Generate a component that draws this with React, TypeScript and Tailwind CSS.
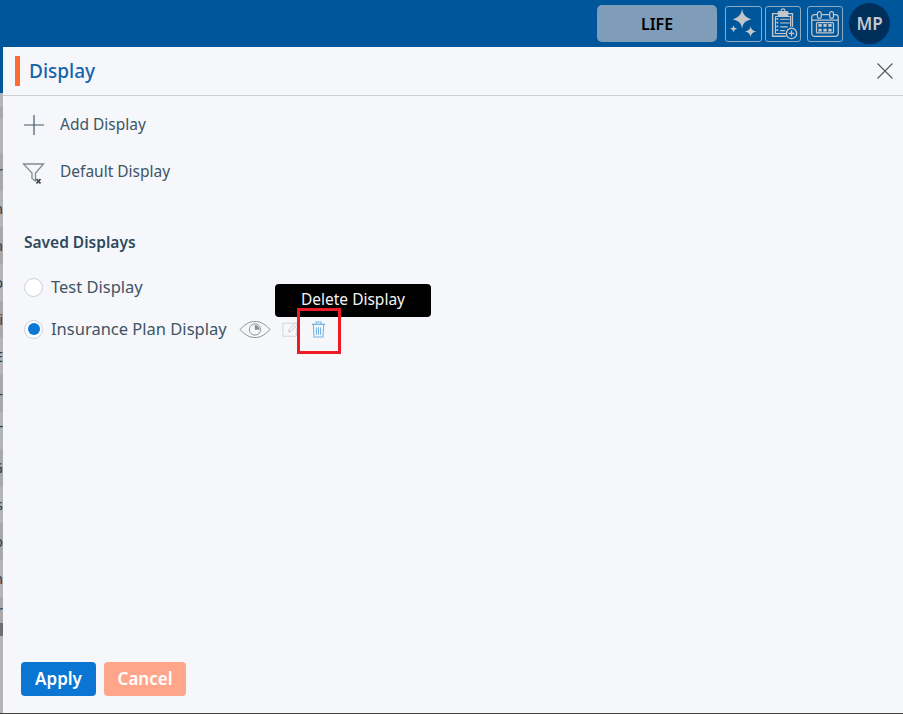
const font = { fontFamily: '"Noto Sans", sans-serif' };

const stripRows = [
  ["#00569b", "h-[46px]", ""],
  ["#b4b4b6", "h-[14px]", ""],
  ["#a9a9ab", "h-[12px]", ""],
  ["#b4b4b6", "h-[34px]", ""],
  ["#a9a9ab", "h-[37px]", "r"],
  ["#b4b4b6", "h-[37px]", "n"],
  ["#a9a9ab", "h-[37px]", "n"],
  ["#b4b4b6", "h-[37px]", "o"],
  ["#a9a9ab", "h-[37px]", "i"],
  ["#b4b4b6", "h-[37px]", "E"],
  ["#a9a9ab", "h-[37px]", "-"],
  ["#b4b4b6", "h-[37px]", "T"],
  ["#a9a9ab", "h-[37px]", "G"],
  ["#b4b4b6", "h-[37px]", "s"],
  ["#a9a9ab", "h-[37px]", "b"],
  ["#b4b4b6", "h-[37px]", "h"],
  ["#a9a9ab", "h-[26px]", "r"],
  ["#6f6f72", "h-[13px]", ""],
  ["#b4b4b6", "flex-1", ""],
];

function Sparkles() {
  return (
    <svg viewBox="0 0 37 36" className="w-[37px] h-[36px]" fill="#c3c7cb">
      <path d="M17 2 C18 8 20 11 27 13 C20 15 18 17 17 23 C16 17 14 15 7 13 C14 11 16 8 17 2Z" />
      <path d="M26 20 C26.600 23.500 28 25 32 26 C28 27 26.600 28.500 26 32 C25.400 28.500 24 27 20 26 C24 25 25.400 23.500 26 20Z" />
      <path d="M8 19 C8.400 21.500 9.500 22.600 12 23 C9.500 23.400 8.400 24.500 8 27 C7.600 24.500 6.500 23.400 4 23 C6.500 22.600 7.600 21.500 8 19Z" />
    </svg>
  );
}

function ClipboardPlus() {
  return (
    <svg viewBox="0 0 36 36" className="w-[36px] h-[36px]" fill="none" stroke="#c3c7cb" strokeWidth="1.2">
      <path d="M21 31 H7 V7 H13 M23 7 H28 V21" strokeWidth="1.500" />
      <path d="M10 10 H26 V21 M21 28 H10 V10" />
      <rect x="13" y="5" width="10" height="4" fill="#c3c7cb" />
      <circle cx="18" cy="4" r="2" />
      <path d="M15 13 H25 M15 17 H25 M15 21 H23 M15 25 H20" />
      <path d="M11 12.500 H13 M11 16.500 H13 M11 20.500 H13 M11 24.500 H13" strokeWidth="1.800" />
      <circle cx="27" cy="28" r="5.500" fill="#00569b" strokeWidth="1.400" />
      <path d="M27 25 V31 M24 28 H30" strokeWidth="1.400" />
    </svg>
  );
}

function Calendar() {
  return (
    <svg viewBox="0 0 36 36" className="w-[36px] h-[36px]" fill="none" stroke="#c3c7cb" strokeWidth="1.300">
      <rect x="4" y="8" width="28" height="23" rx="3" />
      <rect x="10" y="5" width="4" height="7" rx="2" fill="#00569b" />
      <rect x="23" y="5" width="4" height="7" rx="2" fill="#00569b" />
      <path d="M4 14 H32" />
      <rect x="9" y="16.500" width="18" height="11" rx="1" />
      <g fill="#c3c7cb" stroke="none">
        <rect x="11" y="18" width="3.500" height="3" />
        <rect x="16.300" y="18" width="3.500" height="3" />
        <rect x="21.500" y="18" width="3.500" height="3" />
        <rect x="11" y="23" width="3.500" height="3" />
        <rect x="16.300" y="23" width="3.500" height="3" />
        <rect x="21.500" y="23" width="3.500" height="3" />
      </g>
    </svg>
  );
}

function Funnel() {
  return (
    <svg viewBox="0 0 24 24" className="w-[24px] h-[24px]" fill="none" stroke="#7f8a93" strokeWidth="1.300">
      <path d="M1.500 3 H21.500 L13.500 12 V20 L10 17.500 V12 Z" />
      <path d="M14.500 18 L18.500 22.500 M18.500 18 L14.500 22.500" stroke="#36424c" strokeWidth="1.700" />
    </svg>
  );
}

function Eye() {
  return (
    <svg viewBox="0 0 34 20" className="w-[32px] h-[19px]" fill="none" stroke="#8d8d8d" strokeWidth="1">
      <path d="M1 10 C8 2.500 13 1.500 17 1.500 C21 1.500 26 2.500 33 10 C26 17.500 21 18.500 17 18.500 C13 18.500 8 17.500 1 10Z" />
      <circle cx="17" cy="10" r="6" />
      <path d="M17 10 L17 5.500 A4.500 4.500 0 0 1 21.500 10 Z" fill="#8d8d8d" strokeWidth="0.500" />
    </svg>
  );
}

function Pencil() {
  return (
    <svg viewBox="0 0 20 18" className="w-[18px] h-[17px]" fill="none" stroke="#d4d5d8" strokeWidth="1.100">
      <path d="M14 2 H1 V16.500 H16 V8" />
      <path d="M7.500 12 L8 9 L15 1.500 L17.500 3.500 L10 11 Z" stroke="#c4c5c8" />
    </svg>
  );
}

function Trash() {
  return (
    <svg viewBox="0 0 16 18" className="w-[15px] h-[17px]" fill="none" stroke="#72b3e6" strokeWidth="1.100">
      <path d="M1 3.500 H15" strokeWidth="1.400" />
      <path d="M5.500 3 V1 H10.500 V3" />
      <path d="M2.500 4 L3.200 17 H12.800 L13.500 4" />
      <path d="M5.800 6.500 V14.500 M8 6.500 V14.500 M10.200 6.500 V14.500" />
    </svg>
  );
}

export default function App() {
  return (
    <div className="relative w-[903px] h-[714px] overflow-hidden flex flex-col bg-[#f5f7fb] border-b border-[#444]" style={font}>
      {/* Top bar */}
      <header className="h-[47px] shrink-0 bg-[#00569b] flex items-center justify-end pr-[13px]">
        <button className="w-[120px] h-[37px] mr-[8px] rounded-[5px] bg-[#7f9db8] text-[16px] font-semibold text-black">LIFE</button>
        <div className="w-[37px] h-[36px] rounded-[3px] border border-[#8fabc4] flex items-center justify-center overflow-hidden">
          <Sparkles />
        </div>
        <div className="w-[36px] h-[36px] ml-[3px] rounded-[3px] border border-[#8fabc4] flex items-center justify-center overflow-hidden">
          <ClipboardPlus />
        </div>
        <div className="w-[36px] h-[36px] ml-[6px] rounded-[3px] border border-[#8fabc4] flex items-center justify-center overflow-hidden">
          <Calendar />
        </div>
        <div className="w-[41px] h-[41px] ml-[6px] rounded-full bg-[#002f5b] text-[#c3c9cf] text-[17px] font-semibold flex items-center justify-center">MP</div>
      </header>

      <div className="flex-1 flex min-h-0">
        {/* Page behind the panel */}
        <div className="w-[3px] shrink-0 flex flex-col overflow-hidden">
          {stripRows.map(([color, height, letter], i) => (
            <div
              key={i}
              className={`${height} shrink-0 flex items-center justify-end text-[15px] leading-none text-[#2c3e4c]`}
              style={{ backgroundColor: color }}
            >
              {letter}
            </div>
          ))}
        </div>

        {/* Panel */}
        <main className="flex-1 flex flex-col min-w-0">
          <div className="h-[49px] shrink-0 border-b border-[#cfd0d6] flex items-center pl-[12px] pr-[10px]">
            <span className="w-[5px] h-[30px] bg-[#ff6b35]" />
            <h1 className="ml-[9px] text-[19px] font-medium text-[#1464ad]">Display</h1>
            <svg viewBox="0 0 16 16" className="ml-auto w-[16px] h-[16px]" stroke="#555" strokeWidth="1.100">
              <path d="M0.500 0.500 L15.500 15.500 M15.500 0.500 L0.500 15.500" />
            </svg>
          </div>

          <div className="flex-1 pl-[18px] text-[#3f5465]">
            <div className="flex items-center h-[24px] mt-[17px] text-[15.500px]">
              <svg viewBox="0 0 20 20" className="w-[20px] h-[20px] ml-[3px]" stroke="#46596a" strokeWidth="1.200">
                <path d="M10 0 V20 M0 10 H20" />
              </svg>
              <span className="ml-[16px]">Add Display</span>
            </div>
            <div className="flex items-center h-[24px] mt-[23px] text-[15.500px]">
              <span className="ml-[1px] mt-[2px] flex">
                <Funnel />
              </span>
              <span className="ml-[14px]">Default Display</span>
            </div>

            <h2 className="ml-[3px] mt-[46px] text-[15.500px] leading-[24px] font-semibold text-[#2f4a5e]">Saved Displays</h2>

            <div className="ml-[3px] mt-[21px] flex items-center h-[24px]">
              <span className="w-[19px] h-[19px] rounded-full bg-white border border-[#ccd0d6]" />
              <span className="ml-[8px] text-[16.500px]">Test Display</span>
            </div>
            <div className="ml-[3px] mt-[18px] flex items-center h-[24px]">
              <span className="w-[19px] h-[19px] rounded-full bg-white border border-[#ccd0d6] flex items-center justify-center">
                <span className="w-[12px] h-[12px] rounded-full bg-[#0a78d7]" />
              </span>
              <span className="ml-[8px] text-[16.500px]">Insurance Plan Display</span>
              <span className="ml-[12px] mt-[1px] flex items-center">
                <Eye />
              </span>
              <span className="ml-[11px] mt-[1px] flex items-center">
                <Pencil />
              </span>
              <span className="ml-[11px] mt-[1px] flex items-center">
                <Trash />
              </span>
            </div>
          </div>

          <div className="flex gap-[8px] pl-[18px] pb-[17px]">
            <button className="w-[75px] h-[34px] rounded-[4px] bg-[#0a75d3] text-white text-[17px] font-semibold">Apply</button>
            <button className="w-[82px] h-[34px] rounded-[4px] bg-[#ffa68a] text-white text-[17px] font-semibold">Cancel</button>
          </div>
        </main>
      </div>

      {/* Tooltip and highlight */}
      <div className="absolute left-[275px] top-[284px] w-[156px] h-[33px] pb-[2px] rounded-[4px] bg-black text-[#f4f4f4] text-[15.500px] flex items-center justify-center">Delete Display</div>
      <div className="absolute left-[297px] top-[308px] w-[44px] h-[46px] border-[3px] border-[#ed1c24]" />
    </div>
  );
}
